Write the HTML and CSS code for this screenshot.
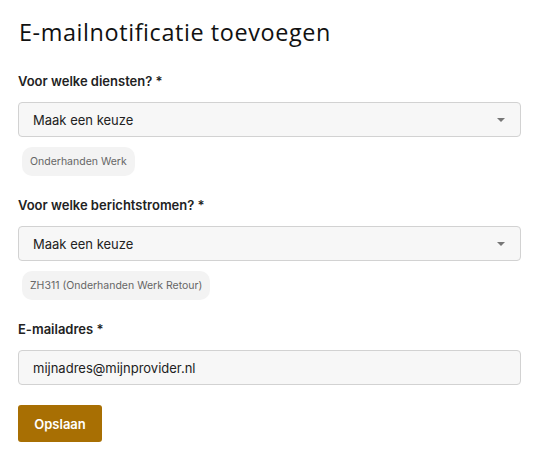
FILE: index.html
```html
<!DOCTYPE html>
<html lang="nl">
<head>
<meta charset="utf-8">
<title>E-mailnotificatie toevoegen</title>
<link rel="stylesheet" href="styles.css">
</head>
<body>
<main class="page">
  <h1 class="title">E-mailnotificatie toevoegen</h1>

  <section class="field">
    <label class="label">Voor welke diensten? *</label>
    <div class="select">
      <span class="select-text">Maak een keuze</span>
      <span class="caret"></span>
    </div>
    <div class="chips"><span class="chip">Onderhanden Werk</span></div>
  </section>

  <section class="field">
    <label class="label">Voor welke berichtstromen? *</label>
    <div class="select">
      <span class="select-text">Maak een keuze</span>
      <span class="caret"></span>
    </div>
    <div class="chips"><span class="chip">ZH311 (Onderhanden Werk Retour)</span></div>
  </section>

  <section class="field">
    <label class="label">E-mailadres *</label>
    <div class="input">mijnadres@mijnprovider.nl</div>
  </section>

  <button class="btn">Opslaan</button>
</main>
</body>
</html>
```

FILE: styles.css
```css
* { box-sizing: border-box; }
html, body { margin: 0; padding: 0; background: #fff; }
body {
  font-family: "Inter", "Liberation Sans", sans-serif;
  color: #222;
}
.page {
  padding: 18px 28px 0 18px;
  display: flex;
  flex-direction: column;
}
.title {
  margin: 0 0 0 1px;
  font-family: "Open Sans", sans-serif;
  font-weight: 400;
  font-size: 23.4px;
  letter-spacing: 0.6px;
  line-height: 28px;
  color: #111;
}
.field {
  display: flex;
  flex-direction: column;
  margin-top: 27px;
}
.field + .field { margin-top: 21px; }
.label {
  font-size: 13px;
  font-weight: 600;
  line-height: 16px;
  color: #222;
  margin-bottom: 13px;
}
.select, .input {
  height: 35px;
  border: 1px solid #d2d2d2;
  border-radius: 4px;
  background: #f7f7f7;
  display: flex;
  align-items: center;
  padding: 0 14px;
  font-size: 13px;
  color: #222;
}
.select-text { flex: 1; }
.caret {
  width: 0; height: 0;
  border-left: 4px solid transparent;
  border-right: 4px solid transparent;
  border-top: 4px solid #777;
  margin-right: 1px;
}
.chips { display: flex; padding: 10px 0 0 4px; }
.chip {
  background: #f3f3f3;
  border-radius: 10px;
  height: 29px;
  padding: 0 8px;
  display: flex;
  align-items: center;
  font-size: 10.5px;
  color: #666;
}
.btn {
  align-self: flex-start;
  margin-top: 20px;
  width: 84px;
  height: 37px;
  border: none;
  border-radius: 3px;
  background: #a86f03;
  color: #fff;
  font-family: "Inter", sans-serif;
  font-size: 13px;
  font-weight: 600;
}
```
